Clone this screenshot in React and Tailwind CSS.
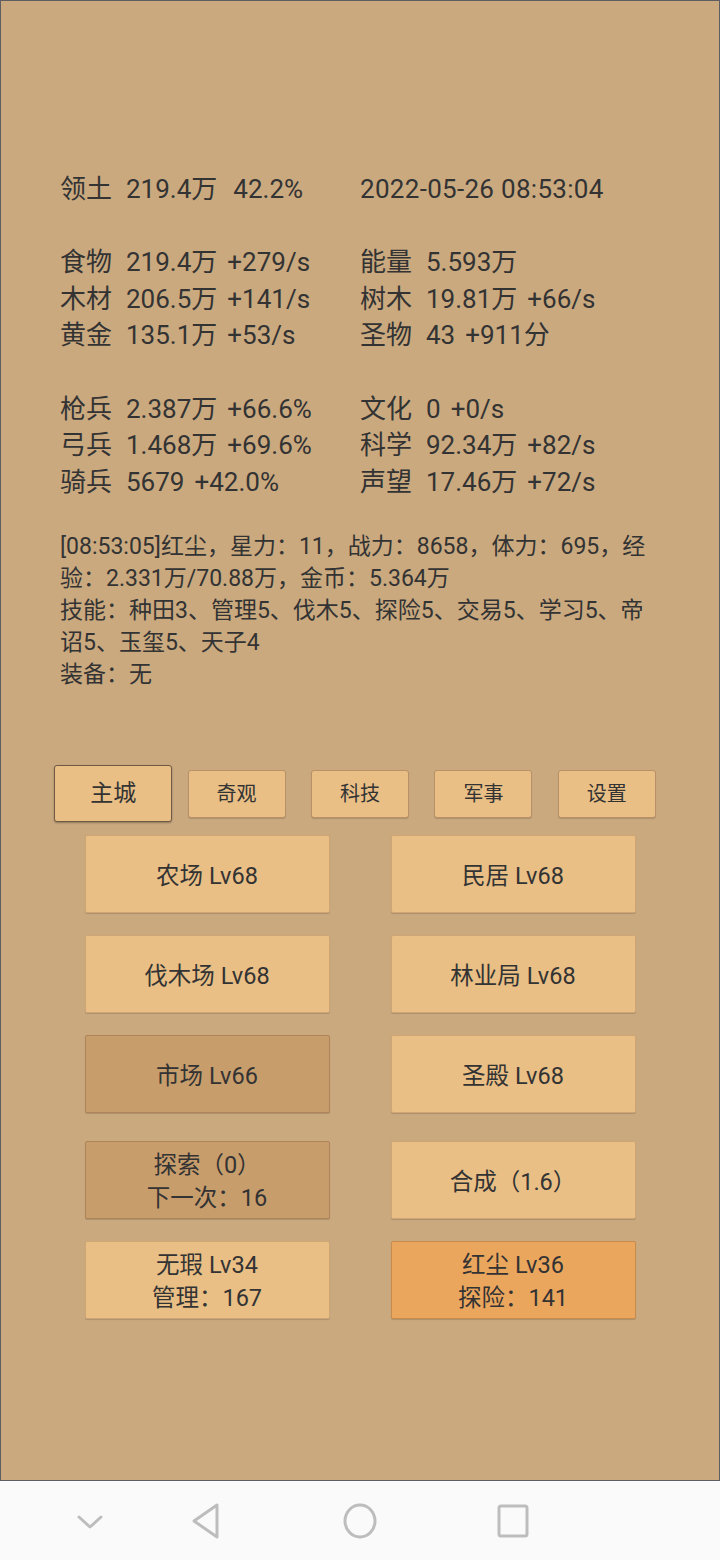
import React from "react";

const font = { fontFamily: "Roboto, 'Noto Sans CJK SC', sans-serif" };

function Line({ l, v, r, wide }) {
  return (
    <div className="h-[36.6px] leading-[36.6px] whitespace-pre flex">
      {l ? (
        <>
          <span className="w-[52px]">{l}</span>
          <span className="ml-[14px]">{v}</span>
          {r ? <span className={wide ? "ml-[16px]" : "ml-[10px]"}>{r}</span> : null}
        </>
      ) : (
        <span>{v || " "}</span>
      )}
    </div>
  );
}

function Btn({ children, tone = "light" }) {
  const bg =
    tone === "dark"
      ? "bg-[#c89d6c] border-[#b08458]"
      : tone === "orange"
      ? "bg-[#eba65e] border-[#c98a4c]"
      : "bg-[#e9bf86] border-[#cfa574]";
  return (
    <div
      className={`w-[245px] h-[78px] pt-[4px] border rounded-[2px] shadow-[0_1px_1px_rgba(0,0,0,0.15)] flex flex-col items-center justify-center text-[23.5px] leading-[33px] text-[#333] ${bg}`}
    >
      {children}
    </div>
  );
}

function Tab({ children, selected }) {
  return (
    <div className="flex items-center justify-center">
      {selected ? (
        <div className="w-[118px] h-[57px] bg-[#e9bf86] border border-[#6f5b45] rounded-[3px] shadow-[0_1px_2px_rgba(0,0,0,0.3)] flex items-center justify-center text-[23px] text-[#333]">
          {children}
        </div>
      ) : (
        <div className="w-[98px] h-[48px] bg-[#e9bf86] border border-[#b99067] rounded-[3px] shadow-[0_1px_1px_rgba(0,0,0,0.15)] flex items-center justify-center text-[20px] text-[#333]">
          {children}
        </div>
      )}
    </div>
  );
}

export default function App() {
  return (
    <div className="w-[720px] h-[1560px] flex flex-col bg-[#fafafa]" style={font}>
      <div className="h-[1481px] bg-[#caa97f] border border-[#5d5d62] pt-[170px] text-[#333] flex flex-col">
        <div className="pl-[59px] grid grid-cols-[300px_1fr] text-[26px]">
          <div>
            <Line l="领土" v="219.4万" r="42.2%" wide />
            <Line />
            <Line l="食物" v="219.4万" r="+279/s" />
            <Line l="木材" v="206.5万" r="+141/s" />
            <Line l="黄金" v="135.1万" r="+53/s" />
            <Line />
            <Line l="枪兵" v="2.387万" r="+66.6%" />
            <Line l="弓兵" v="1.468万" r="+69.6%" />
            <Line l="骑兵" v="5679" r="+42.0%" />
          </div>
          <div>
            <div className="h-[36.6px] leading-[36.6px] tracking-[0.3px]">2022-05-26 08:53:04</div>
            <Line />
            <Line l="能量" v="5.593万" />
            <Line l="树木" v="19.81万" r="+66/s" />
            <Line l="圣物" v="43" r="+911分" />
            <Line />
            <Line l="文化" v="0" r="+0/s" />
            <Line l="科学" v="92.34万" r="+82/s" />
            <Line l="声望" v="17.46万" r="+72/s" />
          </div>
        </div>

        <div className="pl-[59px] mt-[31px] text-[23px] leading-[32px] whitespace-nowrap">
          <div>[08:53:05]红尘，星力：11，战力：8658，体力：695，经</div>
          <div>验：2.331万/70.88万，金币：5.364万</div>
          <div>技能：种田3、管理5、伐木5、探险5、交易5、学习5、帝</div>
          <div>诏5、玉玺5、天子4</div>
          <div>装备：无</div>
        </div>

        <div className="mt-[74px] mx-auto w-[617px] grid grid-cols-5 h-[57px]">
          <Tab selected>主城</Tab>
          <Tab>奇观</Tab>
          <Tab>科技</Tab>
          <Tab>军事</Tab>
          <Tab>设置</Tab>
        </div>

        <div className="mt-[13px] flex flex-col items-center">
          <div className="flex gap-[61px]">
            <Btn>农场 Lv68</Btn>
            <Btn>民居 Lv68</Btn>
          </div>
          <div className="flex gap-[61px] mt-[22px]">
            <Btn>伐木场 Lv68</Btn>
            <Btn>林业局 Lv68</Btn>
          </div>
          <div className="flex gap-[61px] mt-[22px]">
            <Btn tone="dark">市场 Lv66</Btn>
            <Btn>圣殿 Lv68</Btn>
          </div>
          <div className="flex gap-[61px] mt-[28px]">
            <Btn tone="dark">
              <div>探索（0）</div>
              <div>下一次：16</div>
            </Btn>
            <Btn>合成（1.6）</Btn>
          </div>
          <div className="flex gap-[61px] mt-[22px]">
            <Btn>
              <div>无瑕 Lv34</div>
              <div>管理：167</div>
            </Btn>
            <Btn tone="orange">
              <div>红尘 Lv36</div>
              <div>探险：141</div>
            </Btn>
          </div>
        </div>
      </div>

      <div className="flex-1 flex items-center pl-[77px]">
        <svg width="26" height="16" viewBox="0 0 26 16" className="mt-[2px]">
          <path d="M2 3 L13 13 L24 3" fill="none" stroke="#bdbdbd" strokeWidth="3" strokeLinecap="round" strokeLinejoin="round" />
        </svg>
        <svg width="30" height="36" viewBox="0 0 30 36" className="ml-[88px]">
          <path d="M26 2 L26 34 L3 18 Z" fill="none" stroke="#bdbdbd" strokeWidth="3" strokeLinejoin="round" />
        </svg>
        <svg width="34" height="36" viewBox="0 0 34 36" className="ml-[122px]">
          <ellipse cx="17" cy="18" rx="15" ry="16" fill="none" stroke="#bdbdbd" strokeWidth="3" />
        </svg>
        <svg width="32" height="34" viewBox="0 0 32 34" className="ml-[120px]">
          <rect x="2" y="2" width="28" height="30" rx="2" fill="none" stroke="#bdbdbd" strokeWidth="3" />
        </svg>
      </div>
    </div>
  );
}
